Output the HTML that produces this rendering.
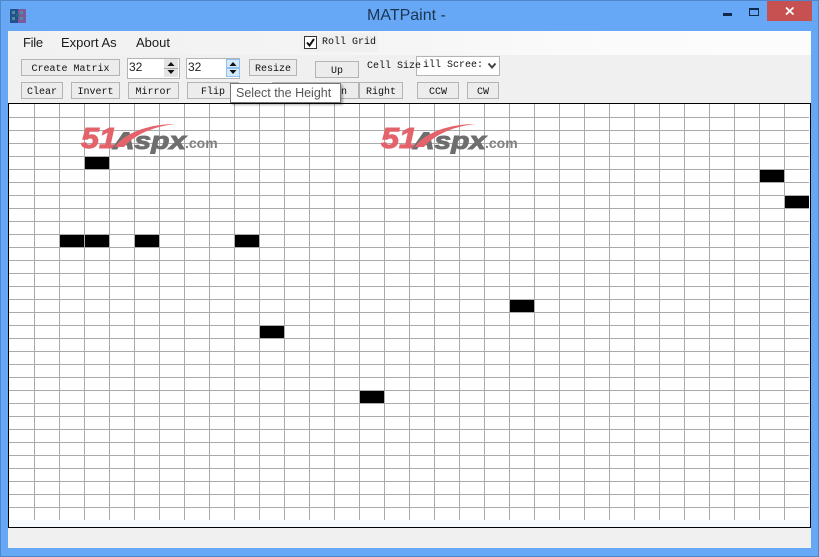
<!DOCTYPE html>
<html><head><meta charset="utf-8"><style>
html,body{margin:0;padding:0;width:819px;height:557px;overflow:hidden;background:#66a8f5}
div{position:absolute;box-sizing:border-box}
.b{background:#ececec;border:1px solid #b4b4b4;font:10px/1 "Liberation Mono",monospace;color:#111;text-align:center;white-space:nowrap;padding-top:1px}
.t{font:10px/14px "Liberation Mono",monospace;color:#111;white-space:nowrap}
.m{font:13px/1 "Liberation Sans",sans-serif;color:#1a1a1a;white-space:nowrap}
.s{background:#fff;border:1px solid #b4b4b4;font:12px/1 "Liberation Sans",sans-serif;color:#222}
.a{background:#e4e4e4}
svg{position:absolute}
</style></head><body>
<div style="left:0;top:0;width:819px;height:1px;background:#4f86c9"></div>
<div style="left:0;top:0;width:1px;height:557px;background:#4f86c9"></div>
<div style="left:818px;top:0;width:1px;height:557px;background:#4f86c9"></div>
<div style="left:0;top:556px;width:819px;height:1px;background:#4f86c9"></div>

<svg style="left:10px;top:9px" width="16" height="14"><rect width="16" height="14" fill="#24508e"/><rect x="8" width="8" height="14" fill="#7d5a9e"/><path d="M2 2h3v3H2zM10 2h3v3h-3zM2 8h3v3H2zM10 8h3v3h-3z" fill="#4e8c9e"/><path d="M6 5h3v3H6z" fill="#1d6d80"/></svg>
<div style="left:367px;top:7px;font:16px/18px 'Liberation Sans',sans-serif;color:#1c3550;white-space:nowrap">MATPaint -</div>
<div style="left:723px;top:13px;width:9px;height:3px;background:#11294a"></div>
<div style="left:749px;top:8px;width:10px;height:8px;border:1px solid #11294a;border-top-width:2px"></div>
<div style="left:767px;top:1px;width:45px;height:20px;background:#c75050"></div>
<svg style="left:785px;top:6px" width="10" height="10"><path d="M1 1.500L8.500 8.500M8.500 1.500L1 8.500" stroke="#fff" stroke-width="1.800"/></svg>

<div style="left:8px;top:31px;width:803px;height:517px;background:#f0f0f0"></div>
<div style="left:8px;top:31px;width:803px;height:24px;background:linear-gradient(90deg,#f1f1f1,#f4f4f4 40%,#fbfbfb 75%,#fcfcfc)"></div>
<div class="m" style="left:23px;top:36px;letter-spacing:-.3px">File</div>
<div class="m" style="left:61px;top:36px">Export As</div>
<div class="m" style="left:136px;top:36px">About</div>

<div style="left:300px;top:33px;width:78px;height:19px;background:#f0f0f0"></div>
<div style="left:304px;top:36px;width:13px;height:13px;background:#fff;border:1px solid #333"></div>
<svg style="left:304px;top:36px" width="13" height="13"><path d="M3 6.500L5.500 9.500L10 3" fill="none" stroke="#111" stroke-width="2"/></svg>
<div class="t" style="left:322px;top:36px">Roll Grid</div>

<div class="b" style="left:21px;top:59px;width:99px;height:17px;line-height:17px">Create Matrix</div>

<div class="s" style="left:127px;top:58px;width:53px;height:21px;padding:2px 0 0 1px">32</div>
<div class="a" style="left:164px;top:59px;width:14px;height:9px"></div>
<div class="a" style="left:164px;top:68px;width:14px;height:9px;border-top:1px solid #aaa"></div>
<svg style="left:164px;top:59px" width="14" height="18"><path d="M7 3L10.500 7H3.500zM7 15L3.500 11H10.500z" fill="#111"/></svg>

<div class="s" style="left:186px;top:58px;width:54px;height:21px;padding:2px 0 0 1px">32</div>
<div style="left:226px;top:59px;width:14px;height:9px;background:#d6e9fa;border:1px solid #8fc1ee"></div>
<div style="left:226px;top:68px;width:14px;height:9px;background:#d6e9fa;border:1px solid #8fc1ee"></div>
<svg style="left:226px;top:59px" width="14" height="18"><path d="M7 3L10.500 7H3.500zM7 15L3.500 11H10.500z" fill="#111"/></svg>

<div class="b" style="left:249px;top:59px;width:48px;height:17px;line-height:17px">Resize</div>
<div class="b" style="left:315px;top:61px;width:44px;height:17px;line-height:17px">Up</div>
<div style="left:416px;top:56px;width:84px;height:20px;background:#fff;border:1px solid #b4b4b4"></div>
<div class="t" style="left:367px;top:60px">Cell Size</div>
<div class="t" style="left:423px;top:59px;width:60px;overflow:hidden">ill Scree:</div>
<svg style="left:487px;top:62px" width="10" height="8"><path d="M1.500 1.500L5 5.500L8.500 1.500" fill="none" stroke="#444" stroke-width="2"/></svg>

<div class="b" style="left:21px;top:82px;width:42px;height:17px;line-height:17px">Clear</div>
<div class="b" style="left:71px;top:82px;width:49px;height:17px;line-height:17px">Invert</div>
<div class="b" style="left:128px;top:82px;width:51px;height:17px;line-height:17px">Mirror</div>
<div class="b" style="left:187px;top:82px;width:52px;height:17px;line-height:17px">Flip</div>
<div class="b" style="left:272px;top:82px;width:87px;height:17px;line-height:17px;text-align:right;padding-right:11px">Down</div>
<div class="b" style="left:359px;top:82px;width:44px;height:17px;line-height:17px">Right</div>
<div class="b" style="left:417px;top:82px;width:42px;height:17px;line-height:17px">CCW</div>
<div class="b" style="left:467px;top:82px;width:32px;height:17px;line-height:17px">CW</div>

<svg style="left:8px;top:103px" width="803" height="425" shape-rendering="crispEdges">
<rect x=".5" y=".5" width="802" height="424" fill="#f6fafd" stroke="#000" stroke-width="1"/>
<rect x="1" y="1" width="800" height="416" fill="#fff"/>
<path stroke="#aaaaaa" stroke-width="1" fill="none" d="M26.500 1V417M51.500 1V417M76.500 1V417M101.500 1V417M126.500 1V417M151.500 1V417M176.500 1V417M201.500 1V417M226.500 1V417M251.500 1V417M276.500 1V417M301.500 1V417M326.500 1V417M351.500 1V417M376.500 1V417M401.500 1V417M426.500 1V417M451.500 1V417M476.500 1V417M501.500 1V417M526.500 1V417M551.500 1V417M576.500 1V417M601.500 1V417M626.500 1V417M651.500 1V417M676.500 1V417M701.500 1V417M726.500 1V417M751.500 1V417M776.500 1V417
M1 14.500H801M1 27.500H801M1 40.500H801M1 53.500H801M1 66.500H801M1 79.500H801M1 92.500H801M1 105.500H801M1 118.500H801M1 131.500H801M1 144.500H801M1 157.500H801M1 170.500H801M1 183.500H801M1 196.500H801M1 209.500H801M1 222.500H801M1 235.500H801M1 248.500H801M1 261.500H801M1 274.500H801M1 287.500H801M1 300.500H801M1 313.500H801M1 326.500H801M1 339.500H801M1 352.500H801M1 365.500H801M1 378.500H801M1 391.500H801M1 404.500H801"/>
<path fill="#000" d="M77 54h24v12H77zM752 67h24v12h-24zM777 93h24v12h-24zM52 132h24v12H52zM77 132h24v12H77zM127 132h24v12h-24zM227 132h24v12h-24zM502 197h24v12h-24zM252 223h24v12h-24zM352 288h24v12h-24z"/>
</svg>

<svg style="left:77px;top:120px" width="145" height="34">
<text x="4" y="28" font-family="Liberation Sans" font-weight="bold" font-style="italic" font-size="29" fill="#e4636b" stroke="#e4636b" stroke-width="1" textLength="36" lengthAdjust="spacingAndGlyphs">51</text>
<text x="36" y="29" font-family="Liberation Sans" font-weight="bold" font-style="italic" font-size="24" fill="#6e6e6e" stroke="#6e6e6e" stroke-width="1" textLength="73" lengthAdjust="spacingAndGlyphs">Aspx</text>
<text x="108" y="28" font-family="Liberation Sans" font-weight="bold" font-size="14" fill="#808080">.com</text>
<path d="M38 27C46 14 70 4 99 4C78 6 58 14 47 27Z" fill="#e4636b"/>
</svg>
<svg style="left:377px;top:120px" width="145" height="34">
<text x="4" y="28" font-family="Liberation Sans" font-weight="bold" font-style="italic" font-size="29" fill="#e4636b" stroke="#e4636b" stroke-width="1" textLength="36" lengthAdjust="spacingAndGlyphs">51</text>
<text x="36" y="29" font-family="Liberation Sans" font-weight="bold" font-style="italic" font-size="24" fill="#6e6e6e" stroke="#6e6e6e" stroke-width="1" textLength="73" lengthAdjust="spacingAndGlyphs">Aspx</text>
<text x="108" y="28" font-family="Liberation Sans" font-weight="bold" font-size="14" fill="#808080">.com</text>
<path d="M38 27C46 14 70 4 99 4C78 6 58 14 47 27Z" fill="#e4636b"/>
</svg>

<div style="left:230px;top:83px;width:111px;height:20px;background:#fff;border:1px solid #767676;box-shadow:2px 2px 2px rgba(0,0,0,.3);font:12.5px/19px 'Liberation Sans',sans-serif;color:#575757;padding-left:5px;white-space:nowrap">Select the Height</div>
</body></html>
